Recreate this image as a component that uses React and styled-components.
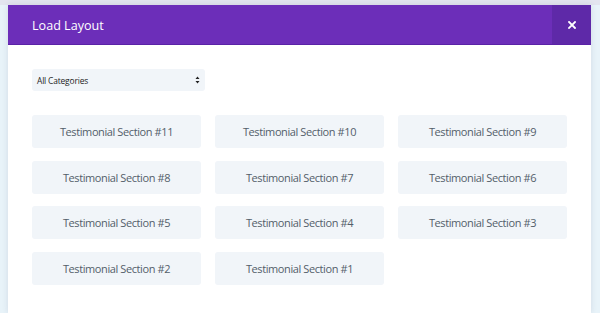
import React from 'react'
import styled, { createGlobalStyle } from 'styled-components'

const Global = createGlobalStyle`
html, body {
margin: 0;
padding: 0;
height: 100%;
overflow: hidden;
}
body {
background: #e8f3f9;
font-family: 'Open Sans', 'Liberation Sans', sans-serif;
}
`

const Page = styled.div`
height: 313px;
padding: 5px 9px 0 8px;
box-sizing: border-box;
background: linear-gradient(#e3e5ef 0, #e3e5ef 5px, #e8f3f9 5px);
`

const Modal = styled.div`
background: #fff;
height: 100%;
box-shadow: 0 0 6px rgba(40, 40, 80, 0.12);
`

const Header = styled.div`
display: flex;
align-items: center;
height: 39px;
background: #6c2eb9;
border-bottom: 1px solid #5a22a6;
`

const Title = styled.h1`
flex: 1;
margin: 0;
padding: 2px 0 0 24px;
font-size: 12.6px;
font-weight: 400;
color: #fff;
`

const Close = styled.button`
width: 39px;
height: 39px;
border: none;
background: #5e29a8;
display: flex;
align-items: center;
justify-content: center;
padding: 0;
`

const Body = styled.div`
padding: 24px 23px 0 24px;
`

const Select = styled.div`
width: 173px;
height: 22px;
box-sizing: border-box;
background: #f1f5f9;
border-radius: 3px;
display: flex;
align-items: center;
justify-content: space-between;
padding: 0 5px 0 5px;
font-size: 8.4px;
letter-spacing: -0.15px;
color: #222;
`

const Grid = styled.div`
margin-top: 24px;
display: grid;
grid-template-columns: repeat(3, 169px);
column-gap: 14px;
row-gap: 12.6px;
`

const Card = styled.div`
height: 33px;
background: #f1f5f9;
border-radius: 3px;
display: flex;
align-items: center;
justify-content: center;
font-size: 11px;
letter-spacing: -0.4px;
color: #535e6a;
`

const items = [11, 10, 9, 8, 7, 6, 5, 4, 3, 2, 1]

const App = () => {
    return (
        <Page>
            <Global />
            <Modal>
                <Header>
                    <Title>Load Layout</Title>
                    <Close>
                        <svg width="8" height="8" viewBox="0 0 8 8">
                            <path d="M1 1L7 7M7 1L1 7" stroke="#fff" strokeWidth="1.8" strokeLinecap="square" />
                        </svg>
                    </Close>
                </Header>
                <Body>
                    <Select>
                        All Categories
                        <svg width="5" height="8" viewBox="0 0 5 8">
                            <path d="M2.5 0.5L4.5 3H0.5Z M2.5 7.5L4.5 5H0.5Z" fill="#222" />
                        </svg>
                    </Select>
                    <Grid>
                        {items.map(n => (
                            <Card key={n}>Testimonial Section #{n}</Card>
                        ))}
                    </Grid>
                </Body>
            </Modal>
        </Page>
    )
}

export default App
